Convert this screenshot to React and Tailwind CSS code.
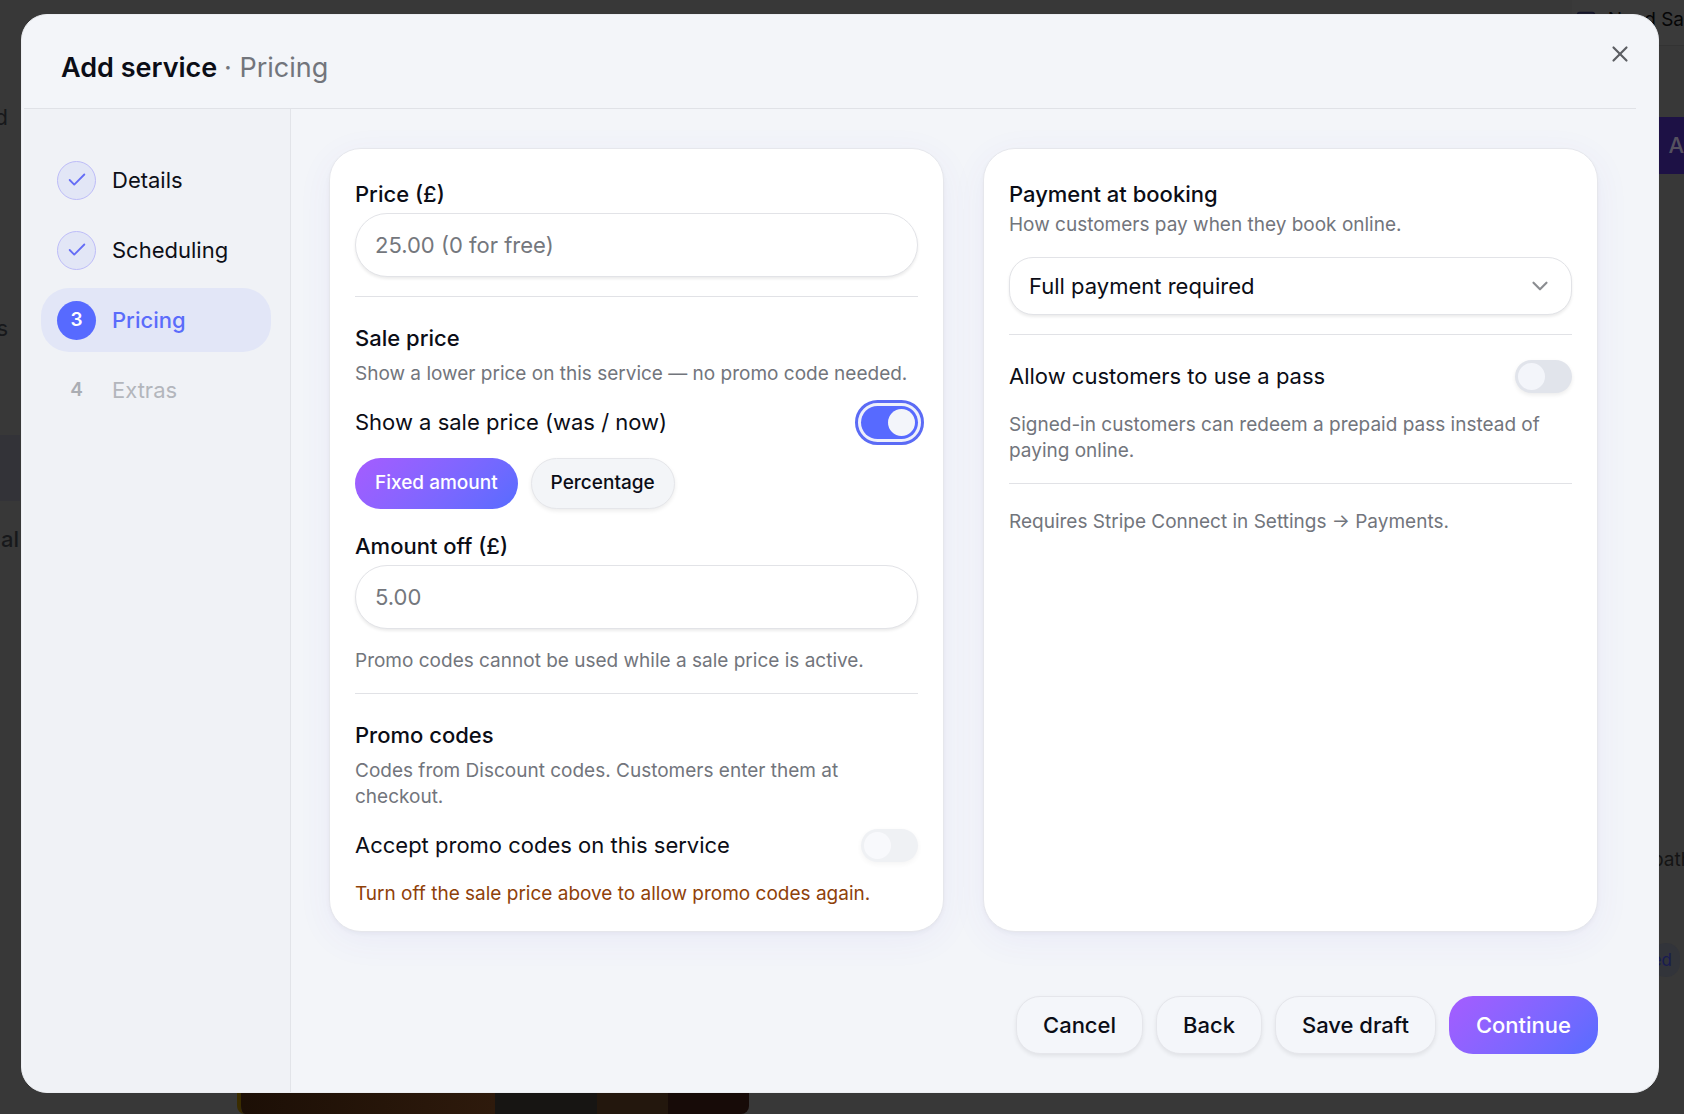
import React, { useState } from "react";
import { Check, ChevronDown, X, Square } from "lucide-react";

const steps = [
  { n: 1, label: "Details", state: "done" },
  { n: 2, label: "Scheduling", state: "done" },
  { n: 3, label: "Pricing", state: "current" },
  { n: 4, label: "Extras", state: "upcoming" },
];

function Step({ n, label, state }) {
  const row =
    state === "current"
      ? "bg-[#e2e6f7] text-[#5b6cfb] font-medium"
      : state === "done"
        ? "text-[#0d0f17]"
        : "text-[#b3b6bc]";
  const dot =
    state === "current"
      ? "bg-[#576aff] text-white"
      : state === "done"
        ? "border border-[#bdbcf8] bg-[#e2e6f6] text-[#656df6]"
        : "text-[#aaadb3]";
  return (
    <li>
      <button
        type="button"
        disabled={state === "upcoming"}
        aria-current={state === "current" ? "step" : undefined}
        className={`flex h-16 w-full items-center gap-4 rounded-[28px] px-4 text-left text-[22px] ${row}`}
      >
        <span className={`flex size-[39px] shrink-0 items-center justify-center rounded-full text-[19px] font-semibold ${dot}`}>
          {state === "done" ? <Check size={22} strokeWidth={2} /> : n}
        </span>
        {label}
      </button>
    </li>
  );
}

function Toggle({ id, focused, ...props }) {
  return (
    <input
      id={id}
      type="checkbox"
      role="switch"
      className={`h-[33px] w-[57px] shrink-0 appearance-none rounded-full bg-[#e1e4eb] p-[3px] shadow-[0_2px_4px_rgba(0,0,0,0.08)] before:block before:size-[27px] before:rounded-full before:bg-[#f3f5fa] checked:bg-[#576aff] checked:before:ml-auto disabled:opacity-50 ${
        focused ? "outline-[3px] outline-offset-[3px] outline-[#5b6bf5] ring-[3px] ring-[#eef0fb]" : ""
      }`}
      {...props}
    />
  );
}

function ToggleRow({ id, label, ...props }) {
  return (
    <div className="flex h-[33px] items-center justify-between gap-4">
      <label htmlFor={id} className="text-[22px]">{label}</label>
      <Toggle id={id} {...props} />
    </div>
  );
}

function Hint({ children }) {
  return <p className="text-[19px] leading-[26px] text-[#72757c]">{children}</p>;
}

function Field({ id, label, placeholder }) {
  return (
    <div className="flex flex-col gap-px">
      <label htmlFor={id} className="text-[22px] leading-[35px] font-medium">{label}</label>
      <input
        id={id}
        type="text"
        inputMode="decimal"
        placeholder={placeholder}
        className="h-16 w-full rounded-full border border-[#e2e3e7] bg-white px-[19px] text-[22px] shadow-[0_2px_3px_rgba(0,0,0,0.08)] placeholder:text-[#74777d]"
      />
    </div>
  );
}

function Heading({ title, hint, tight }) {
  return (
    <div className={tight ? "flex flex-col" : "flex flex-col gap-[5px]"}>
      <h3 className="text-[22px] leading-[35px] font-medium">{title}</h3>
      <Hint>{hint}</Hint>
    </div>
  );
}

const section = "flex flex-col gap-[19px] border-t border-[#e1e2e6]";
const card =
  "flex flex-col gap-[19px] rounded-[32px] border border-[#e6e7ec] bg-white px-[25px] pt-7 pb-6 shadow-[0_8px_36px_rgba(80,70,220,0.06),0_2px_4px_rgba(20,20,40,0.04)]";
const outline =
  "h-[58px] rounded-[24px] border border-[#e5e6eb] bg-[#f4f6fa] px-[26px] text-[22px] font-medium shadow-[0_2px_4px_rgba(0,0,0,0.08)]";

function PageBehind() {
  return (
    <div aria-hidden="true" className="absolute inset-0 flex justify-between overflow-hidden bg-[#383838] text-[22px] text-[#17181b]">
      <div className="flex w-5 flex-col items-end pt-[100px] leading-[35px]">
        <span className="pr-3">d</span>
        <span className="mt-44 pr-3">s</span>
        <div className="mt-[89px] flex h-[66px] w-full bg-[#333338]" />
        <span className="mt-[21px] pr-px font-medium">al</span>
      </div>
      <div className="flex flex-1 flex-col justify-end pl-[217px]">
        <div className="flex h-[22px] w-[512px] max-w-full overflow-hidden rounded-b-lg border-l-4 border-[#3a2c00]">
          <div className="w-1/2 bg-linear-to-r from-[#1c0f06] to-[#2e1a0c]" />
          <div className="w-1/5 bg-[#171513]" />
          <div className="w-[14%] bg-[#23170d]" />
          <div className="flex-1 bg-[#170b08]" />
        </div>
      </div>
      <div className="flex w-28 flex-col items-end">
        <div className="flex h-[46px] w-full items-center justify-between border-b border-[#333333] bg-[#3a3a3a] pb-1 pl-[3px] text-[19px] text-[#050506]">
          <Square size={22} className="text-[#15152a]" />
          <span>Need Sa</span>
        </div>
        <div className="mt-[71px] flex h-[57px] w-[25px] items-center justify-end bg-[#1d1145] font-medium text-[#55515f]">A</div>
        <div className="mt-[669px] w-8 text-[19px] leading-[34px] text-[#141414]">path</div>
        <div className="mt-[66px] mr-1 rounded-full bg-[#32343a] pr-2 text-[17px] leading-[34px] text-[#181b52]">ed</div>
      </div>
    </div>
  );
}

export default function App() {
  const [onSale, setOnSale] = useState(true);
  const [pass, setPass] = useState(false);
  const [mode, setMode] = useState("fixed");
  const pill = (on) =>
    on
      ? "bg-linear-135 from-[#a55cff] to-[#566cff] text-white border-transparent bg-origin-border"
      : "border-[#e5e6ea] bg-[#f3f5f8] shadow-[0_2px_4px_rgba(0,0,0,0.08)]";

  return (
    <div className="relative flex min-h-screen pt-[14px] pr-[25px] pb-[21px] pl-[21px] font-['Inter',sans-serif] text-[#0b0d16]">
      <PageBehind />
      <div
        role="dialog"
        aria-labelledby="dialog-title"
        className="relative flex w-full flex-col overflow-hidden rounded-[26px] border border-[#eceef2] bg-[#f3f5f9] pr-[22px] pl-0.5"
      >
        <header className="border-b border-[#e0e2e7] pt-[37px] pb-6 pl-[37px]">
          <h2 id="dialog-title" className="text-[27px] leading-8 font-semibold">
            Add service <span className="font-normal text-[#72757c]">· Pricing</span>
          </h2>
          <button type="button" aria-label="Close" className="absolute top-[26px] right-[25px] text-[#5c5e63]">
            <X size={26} strokeWidth={2} />
          </button>
        </header>

        <div className="flex flex-1">
          <nav aria-label="Steps" className="w-[267px] shrink-0 border-r border-[#e2e4e9] bg-[#f0f2f6] pt-[39px] pr-[19px] pl-[17px]">
            <ol className="flex flex-col gap-1.5">
              {steps.map((s) => <Step key={s.n} {...s} />)}
            </ol>
          </nav>

          <main className="flex flex-1 flex-col justify-between px-[38px] pt-[39px] pb-[38px]">
            <div className="grid grid-cols-2 gap-[39px]">
              <div className={card}>
                <Field id="price" label="Price (£)" placeholder="25.00 (0 for free)" />
                <section className={`${section} pt-6`}>
                  <Heading title="Sale price" hint="Show a lower price on this service — no promo code needed." />
                  <ToggleRow
                    id="sale"
                    label="Show a sale price (was / now)"
                    focused
                    checked={onSale}
                    onChange={(e) => setOnSale(e.target.checked)}
                  />
                  <div className="flex gap-[13px]">
                    <button type="button" onClick={() => setMode("fixed")} className={`h-[51px] rounded-full border px-[19px] text-[19px] font-medium ${pill(mode === "fixed")}`}>
                      Fixed amount
                    </button>
                    <button type="button" onClick={() => setMode("percent")} className={`h-[51px] rounded-full border px-[19px] text-[19px] font-medium ${pill(mode === "percent")}`}>
                      Percentage
                    </button>
                  </div>
                  <div className="pt-px">
                    <Field id="amount" label="Amount off (£)" placeholder="5.00" />
                  </div>
                  <Hint>Promo codes cannot be used while a sale price is active.</Hint>
                </section>
                <section className={`${section} pt-6`}>
                  <Heading title="Promo codes" hint="Codes from Discount codes. Customers enter them at checkout." />
                  <ToggleRow id="promo" label="Accept promo codes on this service" disabled />
                  <p className="text-[19px] leading-[26px] text-[#8f4109]">Turn off the sale price above to allow promo codes again.</p>
                </section>
              </div>

              <div className={card}>
                <Heading tight title="Payment at booking" hint="How customers pay when they book online." />
                <div className="relative">
                  <select
                    aria-label="Payment at booking"
                    className="h-[58px] w-full appearance-none rounded-[24px] border border-[#e2e3e7] bg-white px-[19px] text-[22px] shadow-[0_2px_3px_rgba(0,0,0,0.08)]"
                  >
                    <option>Full payment required</option>
                  </select>
                  <ChevronDown size={26} strokeWidth={2} className="pointer-events-none absolute top-4 right-[19px] text-[#8b8d91]" />
                </div>
                <section className={`${section} pt-[25px]`}>
                  <ToggleRow id="pass" label="Allow customers to use a pass" checked={pass} onChange={(e) => setPass(e.target.checked)} />
                  <Hint>Signed-in customers can redeem a prepaid pass instead of paying online.</Hint>
                </section>
                <section className={`${section} pt-[25px]`}>
                  <Hint>Requires Stripe Connect in Settings → Payments.</Hint>
                </section>
              </div>
            </div>

            <footer className="flex justify-end gap-[13px] pt-10">
              <button type="button" className={outline}>Cancel</button>
              <button type="button" className={outline}>Back</button>
              <button type="button" className={outline}>Save draft</button>
              <button type="button" className="h-[58px] rounded-[24px] border border-transparent bg-linear-135 from-[#a55cff] to-[#566cff] bg-origin-border px-[26px] text-[22px] font-medium text-white">
                Continue
              </button>
            </footer>
          </main>
        </div>
      </div>
    </div>
  );
}
